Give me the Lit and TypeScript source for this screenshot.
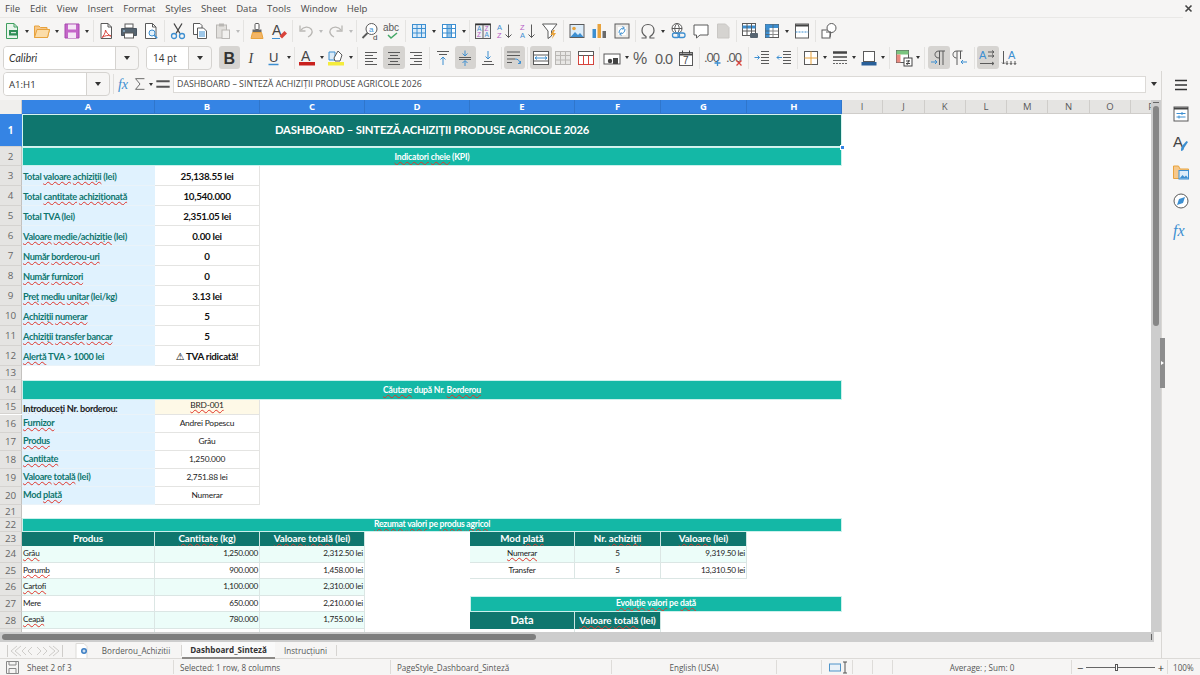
import { LitElement, html, css, svg, nothing } from "lit";
import { customElement } from "lit/decorators.js";

// shorthand for toolbar glyphs, all drawn on an 18x18 box
const G = "#5a5a5a";
const B = "#3d8fd1";
const O = "#e8a33d";
const R = "#d9443c";
const LG = "#b9b7b4";
const SANS = "Liberation Sans";

const lines = (ys: number[], x1 = 3, x2 = 15, c = G) =>
  ys.map((y) => svg`<path d="M${x1} ${y}H${x2}" stroke=${c} fill="none"/>`);

const gridIcon = (c: string, fill = "#fff") => svg`
  <rect x="2.5" y="2.5" width="13" height="13" fill=${fill} stroke=${c}/>
  <path d="M2.5 6.5h13M2.5 11h13M7 2.5v13M11.5 2.5v13" stroke=${c} fill="none"/>`;

const ICONS: Record<string, unknown> = {
  new: svg`<path d="M3.5 1.5H11L14.5 5v11.5h-11z" fill="#e9f5ec" stroke="#3f9e5f"/><path d="M11 1.5V5h3.5" fill="none" stroke="#3f9e5f"/><rect x="6" y="8" width="9" height="5.5" fill="#2f8f57"/><path d="M8 10.7h5" stroke="#fff"/>`,
  open: svg`<path d="M1.5 4v11.5h13l2-8H14V5.500H7.500L6 4z" fill="#f7c88a" stroke=${O}/><path d="M1.500 15.500l2.500-8h12.500l-2 8z" fill="#fbdca8" stroke=${O}/>`,
  save: svg`<path d="M2 2h14v14H2z" fill="#c466c9" stroke="#a648ad"/><rect x="5" y="2.5" width="8" height="5" fill="#f5e6f6"/><rect x="5" y="10.5" width="8" height="5.5" fill="#f5e6f6"/>`,
  pdf: svg`<path d="M4 1.5h7L14.5 5v11.5H4z" fill="#fff" stroke=${G}/><path d="M11 1.5V5h3.5" fill="none" stroke=${G}/><path d="M8.5 8c0 3-2 6-3.500 7.500 3-2 6-2.500 9-1.500-2.500-1-4.500-3-5.500-6z" fill="none" stroke=${R}/>`,
  print: svg`<rect x="5" y="2" width="8" height="4" fill="#fff" stroke=${G}/><path d="M1.5 6.5h15v7h-15z" fill="#566470" stroke="#4a5560"/><rect x="4.5" y="11" width="9" height="5" fill="#fff" stroke=${G}/><path d="M3 9h2" stroke="#9fd0f0"/>`,
  preview: svg`<path d="M3.5 1.5h7L14 5v11.500H3.500z" fill="#fff" stroke=${G}/><path d="M10.5 1.5V5H14" fill="none" stroke=${G}/><circle cx="10" cy="11" r="3" fill="#e3f1fb" stroke=${B}/><path d="M12.2 13.2l3 3" stroke=${B} stroke-width="1.5"/>`,
  cut: svg`<path d="M5 1.5l6 10M13 1.5l-6 10" stroke="#444" stroke-width="1.3" fill="none"/><circle cx="5" cy="14" r="2.5" fill="none" stroke=${B} stroke-width="1.3"/><circle cx="13" cy="14" r="2.5" fill="none" stroke=${B} stroke-width="1.3"/>`,
  copy: svg`<path d="M2.5 1.5H9l2 2v9H2.500z" fill="#fff" stroke=${G}/><path d="M6.5 6h6l3 3v7.500h-9z" fill="#fff" stroke=${G}/>${lines([10, 12, 14], 8, 14, B)}`,
  paste: svg`<rect x="2.5" y="3" width="10" height="13" fill="#e2e0dd" stroke=${LG}/><rect x="5" y="1.5" width="5" height="3" fill=${LG}/><rect x="8" y="8" width="7.5" height="8.5" fill="#f2f1ef" stroke=${LG}/>`,
  clone: svg`<rect x="7" y="1.5" width="4" height="6" rx="1" fill="#fff" stroke=${G}/><path d="M4.5 7.5h9v3h-9z" fill="#6a6a6a"/><path d="M4.5 10.5h9l1.500 6h-12z" fill="#f3b565" stroke=${O}/>`,
  clear: svg`<text x="2" y="13" font-size="14" font-family=${SANS} fill="#444">A</text><path d="M9.5 14l5-5 2.500 2.500-5 5z" fill=${R}/><path d="M2 16.500h8" stroke=${B}/>`,
  undo: svg`<path d="M4 8c2.500-3.500 8-4 10.500-.5 1.500 2.500 0 6-3.500 7.500" fill="none" stroke=${LG} stroke-width="1.3"/><path d="M3 3.500V9h5.500" fill="none" stroke=${LG} stroke-width="1.3"/>`,
  redo: svg`<path d="M14 8C11.500 4.500 6 4 3.500 7.500 2 10 3.500 13.500 7 15" fill="none" stroke=${LG} stroke-width="1.3"/><path d="M15 3.500V9H9.500" fill="none" stroke=${LG} stroke-width="1.3"/>`,
  find: svg`<circle cx="10.5" cy="7" r="5.5" fill="#fff" stroke=${G}/><text x="8" y="9.5" font-size="8" font-family=${SANS} fill=${B}>a</text><path d="M6.500 11l-5 5" stroke=${G} stroke-width="1.8"/><text x="12" y="17.5" font-size="8" font-family=${SANS} fill="#444">d</text>`,
  spell: svg`<text x="0" y="9" font-size="10" font-family=${SANS} fill=${G}>abc</text><path d="M5 13l3 3 6-5" fill="none" stroke="#44a868" stroke-width="1.5"/>`,
  table: gridIcon(B, "#dcecf9"),
  col: svg`${gridIcon(B)}<rect x="7" y="2.5" width="4.5" height="13" fill=${B} opacity=".55"/>`,
  sort: svg`<rect x="1.5" y="2" width="15" height="14.5" fill="#eef0f2" stroke=${G}/><path d="M1.500 2.500h15" stroke="#333" stroke-width="1.5"/><path d="M9 3v13" stroke=${G}/><text x="3" y="9" font-size="6.5" font-family=${SANS} fill=${B}>A</text><text x="3" y="15" font-size="6.5" font-family=${SANS} fill="#b65cc4">Z</text><text x="10.5" y="9" font-size="6.5" font-family=${SANS} fill="#b65cc4">Z</text><text x="10.5" y="15" font-size="6.5" font-family=${SANS} fill=${B}>A</text>`,
  asc: svg`<text x="1" y="8" font-size="7.5" font-family=${SANS} fill=${B}>A</text><text x="1" y="16" font-size="7.5" font-family=${SANS} fill="#b65cc4">Z</text><path d="M12.500 2.500v13M9.500 12.500l3 3 3-3" fill="none" stroke=${G}/>`,
  desc: svg`<text x="1" y="8" font-size="7.5" font-family=${SANS} fill="#b65cc4">Z</text><text x="1" y="16" font-size="7.5" font-family=${SANS} fill=${B}>A</text><path d="M12.500 2.500v13M9.500 12.500l3 3 3-3" fill="none" stroke=${G}/>`,
  filter: svg`<path d="M1.500 2H16l-5.500 7v5L7 16.500V9z" fill="#fff" stroke=${G}/><path d="M12 8l-2.500 5H12l-1 4 4-6h-2.500L14 8z" fill=${O}/>`,
  image: svg`<rect x="2" y="2.5" width="14" height="13" fill="#dcecf9" stroke=${G}/><circle cx="6" cy="6.5" r="1.8" fill=${O}/><path d="M2.500 15L7 10l3 3 2-2 3.500 4z" fill=${B}/>`,
  chart: svg`<rect x="2.5" y="7" width="3.5" height="9" fill=${B}/><rect x="7.5" y="2" width="3.5" height="14" fill=${O}/><rect x="12.5" y="9" width="3.5" height="7" fill="#6a6a6a"/>`,
  pivot: svg`<rect x="2" y="2" width="14" height="14" fill="#eeece9" stroke=${G}/><path d="M5 5h8v8H5z" fill="#fff"/><path d="M6 11c0-3 2-5 5-5M9.500 4.500L11.500 6l-2 1.500M12 7c0 3-2 5-5 5M8.500 13.500L6.500 12l2-1.500" fill="none" stroke=${B}/>`,
  omega: svg`<path d="M2.500 16H7v-1.500C4.500 13 3 11 3 8.500 3 5 5.500 2.500 9 2.500s6 2.500 6 6c0 2.500-1.500 4.500-4 6V16h4.500" fill="none" stroke=${G} stroke-width="1.2"/>`,
  link: svg`<circle cx="8" cy="6.5" r="5" fill="#fff" stroke=${G}/><path d="M3 6.500h10M8 1.500c-3 3-3 7 0 10M8 1.500c3 3 3 7 0 10" fill="none" stroke=${G}/><rect x="3.5" y="11" width="7" height="4.5" rx="2" fill="none" stroke=${B} stroke-width="1.3"/><rect x="9" y="11" width="7" height="4.5" rx="2" fill="none" stroke=${B} stroke-width="1.3"/>`,
  comment: svg`<path d="M2 3h14v10H8l-3.500 3v-3H2z" fill="#fff" stroke=${G}/>`,
  note: svg`<path d="M3.500 2h8L15 5.500V16H3.500z" fill="#d5d3d0" stroke="#c9c7c4"/>`,
  header: svg`<rect x="1.5" y="1.5" width="13" height="12" fill="#fff" stroke=${G}/><path d="M1.500 5h13" stroke=${B} stroke-width="3"/><path d="M1.500 9h13M6 1.500v12M10.500 1.500v12" stroke=${G}/><rect x="9" y="11" width="8" height="5" rx="1" fill="#566470"/>`,
  freeze: svg`<rect x="2.5" y="2.5" width="13" height="13" fill="#fff" stroke=${G}/><rect x="2.5" y="2.5" width="13" height="3.5" fill=${B}/><rect x="2.5" y="2.5" width="4" height="13" fill=${B}/><path d="M2.500 9h13M2.500 12.500h13M10 2.500v13" stroke=${G} opacity=".7"/>`,
  split: svg`<rect x="2.5" y="2" width="13" height="14" fill="#fff" stroke=${G}/><path d="M2.500 3.500h13" stroke="#444" stroke-width="2"/><path d="M2.500 10h13" stroke=${B} stroke-dasharray="2 1"/>`,
  shape: svg`<rect x="2" y="8" width="8" height="8" fill="#fff" stroke=${G}/><circle cx="11.5" cy="6" r="4.5" fill="#fff" stroke=${G}/><path d="M6 10h5l-1 5" fill="none" stroke=${G}/>`,

  bold: svg`<text x="3.5" y="14.5" font-size="16" font-weight="700" font-family=${SANS} fill="#333">B</text>`,
  italic: svg`<text x="5.5" y="14" font-size="14" font-style="italic" font-family="Liberation Serif" fill="#444">I</text>`,
  under: svg`<text x="4" y="12.5" font-size="13" font-family=${SANS} fill="#444">U</text><path d="M3.500 15.500h10" stroke=${B} stroke-width="1.5"/>`,
  fcolor: svg`<text x="3" y="11.5" font-size="14" font-family=${SANS} fill="#444">A</text><rect x="1" y="13" width="16" height="3.5" fill="#c9211e"/>`,
  hcolor: svg`<rect x="1" y="13" width="16" height="3.5" fill="#f5ec3c"/><path d="M2 3h6v8H2z" fill="#dcecf9" stroke=${B}/><path d="M7 9l4-7 4 4-2 6H8z" fill="#fff" stroke=${G}/>`,
  aleft: svg`<path d="M3 3.500h12M3 6.500h8M3 9.500h12M3 12.500h8M3 15.500h12" stroke=${G} fill="none"/>`,
  acenter: svg`<path d="M3 3.500h12M5 6.500h8M3 9.500h12M5 12.500h8M3 15.500h12" stroke=${G} fill="none"/>`,
  aright: svg`<path d="M3 3.500h12M7 6.500h8M3 9.500h12M7 12.500h8M3 15.500h12" stroke=${G} fill="none"/>`,
  vtop: svg`<path d="M3 2.500h12M5 5.500h8" stroke=${G} fill="none"/><path d="M9 8v8M6.500 10.500L9 8l2.500 2.500" stroke=${B} fill="none"/>`,
  vmid: svg`<path d="M3 8.500h12M3 10.500h12" stroke=${G} fill="none"/><path d="M9 1.500v5M6.500 4.500L9 7l2.500-2.500M9 17v-5M6.500 14L9 11.500l2.500 2.500" stroke=${B} fill="none"/>`,
  vbot: svg`<path d="M3 15.500h12M5 12.500h8" stroke=${G} fill="none"/><path d="M9 2v8M6.500 7.500L9 10l2.500-2.500" stroke=${B} fill="none"/>`,
  wrap: svg`${lines([3, 6.5], 2, 15)}<path d="M2 10h8M2 13.500h5" stroke=${G}/><path d="M10 10c3 0 4 1 5 4M13 14.500h2.500V12" stroke=${B} fill="none"/>`,
  merge: svg`<rect x="1.5" y="2.5" width="15" height="13" fill="#fff" stroke=${G}/><path d="M1.500 6h15M1.500 12h15" stroke=${G}/><path d="M3 9h12M5 7.500L3 9l2 1.500M13 7.500L15 9l-2 1.500" fill="none" stroke=${B}/>`,
  unmerge: svg`<rect x="1.5" y="2.5" width="15" height="13" fill="#e8e7e5" stroke=${LG}/><path d="M1.500 6.500h15M1.500 11h15M6.500 2.500v13M11.500 2.500v13" stroke=${LG}/>`,
  redgrid: svg`<rect x="1.5" y="2.5" width="15" height="13" fill="#fff" stroke=${G}/><path d="M1.500 6.500h15" stroke=${G}/><path d="M6.500 6.500v9M11.500 6.500v9M1.500 6.500v9h15v-9" stroke=${R} fill="none"/>`,
  curr: svg`<rect x="1" y="5" width="16" height="10" fill="#fff" stroke=${G}/><circle cx="7" cy="12" r="2.2" fill="#444"/><rect x="10" y="9" width="5" height="6" fill="#444"/>`,
  pct: svg`<text x="1" y="15" font-size="16" font-family=${SANS} fill=${G}>%</text>`,
  dec: svg`<text x="0" y="15" font-size="14.5" letter-spacing="-1" font-family=${SANS} fill=${G}>0.0</text>`,
  date: svg`<rect x="2.5" y="3.5" width="13" height="13" fill="#fff" stroke=${G}/><path d="M2.500 5.500h13" stroke="#444" stroke-width="2"/><path d="M5.500 1.500v3M12.500 1.500v3" stroke="#444"/><text x="6" y="15" font-size="10" font-family=${SANS} fill="#444">7</text>`,
  adddec: svg`<text x="0" y="12.5" font-size="13" letter-spacing="-1" font-family=${SANS} fill=${G}>.00</text><path d="M13.500 11v6M10.500 14h6" stroke=${B} stroke-width="1.3"/>`,
  remdec: svg`<text x="0" y="12.5" font-size="13" letter-spacing="-1" font-family=${SANS} fill=${G}>.00</text><path d="M10.500 11.500l5 5M15.500 11.500l-5 5" stroke=${R} stroke-width="1.3"/>`,
  indent: svg`${lines([2.5, 5.5, 8.5, 11.5, 14.5], 8, 16)}<path d="M1.500 8.500h5M4.500 6.500l2 2-2 2" stroke=${B} fill="none"/>`,
  outdent: svg`${lines([2.5, 5.5, 8.5, 11.5, 14.5], 8, 16)}<path d="M7 8.500H2M4 6.500l-2 2 2 2" stroke=${B} fill="none"/>`,
  borders: svg`<rect x="2.5" y="2.5" width="13" height="13" fill="#fff" stroke=${G}/><path d="M9 2.500v13M2.500 9h13" stroke=${O}/>`,
  lstyle: svg`<path d="M2 3.500h14" stroke="#444" stroke-width="2.5"/><path d="M2 8h14" stroke="#444" stroke-width="1.5"/><path d="M2 11.500h14" stroke="#666"/><path d="M2 14.500h14" stroke="#666" stroke-dasharray="2 1"/>`,
  bcolor: svg`<rect x="3.5" y="2.5" width="11" height="10" fill="#fff" stroke=${G}/><rect x="1.5" y="13" width="15" height="3.5" fill="#2a6099"/>`,
  cond: svg`<rect x="1.5" y="1.5" width="12" height="12" fill="#fff" stroke=${G}/><rect x="1.5" y="1.5" width="12" height="4" fill="#7bc47f"/><rect x="1.5" y="5.5" width="4" height="8" fill="#e98a80"/><rect x="9" y="9" width="8" height="8" fill="#fff" stroke="#444"/><path d="M11 12h4M11 14.500h4M14 11l-2 5" stroke="#444"/>`,
  ltr: svg`<path d="M9.500 2v14M13 2v14M15 2H9C6 2 5 4 5 5.500S6 9 9 9" fill="none" stroke=${G}/><path d="M1 13h6M5 11l2 2-2 2" stroke=${B} fill="none"/>`,
  rtl: svg`<path d="M5 2v14M8.500 2v8M10.500 2H4.500C2 2 1 4 1 5.500S2 9 4.500 9" fill="none" stroke=${G}/><path d="M15 13H9M11 11l-2 2 2 2" stroke=${B} fill="none"/>`,
  ahoriz: svg`<text x="0" y="10" font-size="11" font-family=${SANS} fill=${B}>A</text><path d="M9 3h6M13 1.500L15 3l-2 1.500M9 7h6M13 5.500L15 7l-2 1.500M1 14.500h14M13 13l2 1.500-2 1.500" stroke=${G} fill="none"/>`,
  avert: svg`<text x="7" y="10" font-size="11" font-family=${SANS} fill=${B}>A</text><path d="M2.500 2v13M1 13.500L2.500 15 4 13.500M6 12v3.500M4.800 14L6 15.500 7.200 14M10 12v3.500M8.800 14l1.200 1.500 1.200-1.500M14 12v3.500M12.800 14l1.200 1.500 1.200-1.500" stroke=${G} fill="none"/>`,

  burger: svg`<path d="M3 4.500h12M3 9h12M3 13.500h12" stroke="#333" stroke-width="1.5"/>`,
  props: svg`<rect x="2" y="2" width="14" height="14" fill="#fff" stroke=${G}/><path d="M2 3.500h14" stroke="#444" stroke-width="2"/><path d="M4.500 8.500h9M4.500 12h9" stroke=${B}/><path d="M10 7v3M7 10.500v3" stroke=${B}/>`,
  styles: svg`<text x="1" y="13" font-size="15" font-family=${SANS} fill="#444">A</text><path d="M9 17c3 0 3-3 3-3l4-6-1.500-1-4.500 5s-1 1-1 5z" fill=${B}/>`,
  gallery: svg`<path d="M1.500 3v12.500h15V6H8L6.500 3z" fill="#f7c88a" stroke=${O}/><rect x="7" y="7.5" width="9.5" height="8.5" fill="#dcecf9" stroke=${B}/><path d="M7.500 15.500l3-3.500 2 2 1.500-1.500 2.500 3z" fill=${B}/>`,
  nav: svg`<circle cx="9" cy="9" r="7" fill="#fff" stroke=${G}/><path d="M13 5l-2 6-6 2 2-6z" fill=${B}/>`,
  fx: svg`<text x="1" y="15" font-size="16" font-style="italic" font-family="Liberation Serif" fill=${B}>fx</text>`,
};

const icon = (name: string) =>
  html`<svg class="ico" viewBox="0 0 18 18" width="18" height="18">${ICONS[name]}</svg>`;

const TOP = "new dd open dd save dd | pdf print preview | cut copy paste ddg | clone clear | undo ddg redo ddg | find spell | table dd col dd | sort asc desc filter | image chart pivot | omega dd link comment note | header freeze dd split | shape";
const FORMAT = "*bold italic under dd | fcolor dd hcolor dd || aleft *acenter aright | vtop *vmid vbot | *wrap | *merge unmerge redgrid | curr dd pct dec date | adddec remdec | indent outdent | borders dd lstyle dd bcolor dd || cond dd || *ltr rtl | *ahoriz avert";

const tool = (t: string) => {
  if (t === "|") return html`<span class="sep"></span>`;
  if (t === "||") return html`<span class="sep wide"></span>`;
  if (t === "dd") return html`<span class="dd"></span>`;
  if (t === "ddg") return html`<span class="dd off"></span>`;
  const on = t.startsWith("*");
  return html`<span class="tb ${on ? "on" : ""}">${icon(on ? t.slice(1) : t)}</span>`;
};

// "~word" gets the red spell check wave under it
const txt = (s: string) =>
  s.split(" ").map((w, i) => {
    const sp = i ? " " : "";
    return w.startsWith("~")
      ? html`${sp}<span class="sq">${w.slice(1)}</span>`
      : html`${sp}${w}`;
  });

type Cell = [col: number, row: number, span: number, cls: string, text: string];

const ROWS = [33, 19, ...Array(10).fill(20), 14, 20, 14, ...Array(5).fill(18), 13, 14, 14, 16.6, 16.6, 16.6, 16.6, 16.6, 20];
const COLS = ["A", "B", "C", "D", "E", "F", "G", "H", "I", "J", "K", "L", "M", "N", "O", "P"];

const kpi: [string, string][] = [
  ["Total ~valoare ~achiziții (lei)", "25,138.55 lei"],
  ["Total ~cantitate ~achiziționată", "10,540.000"],
  ["Total TVA (lei)", "2,351.05 lei"],
  ["~Valoare ~medie/achiziție (lei)", "0.00 lei"],
  ["~Număr ~borderou-uri", "0"],
  ["~Număr ~furnizori", "0"],
  ["~Preț ~mediu ~unitar (lei/kg)", "3.13 lei"],
  ["~Achiziții ~numerar", "5"],
  ["~Achiziții ~transfer ~bancar", "5"],
  ["~Alertă TVA > 1000 lei", "⚠ TVA ridicată!"],
];
const lookup: [string, string][] = [
  ["~Furnizor", "Andrei Popescu"],
  ["~Produs", "Grâu"],
  ["~Cantitate", "1,250.000"],
  ["~Valoare ~totală (lei)", "2,751.88 lei"],
  ["Mod ~plată", "Numerar"],
];
const products = [
  ["~Grâu", "1,250.000", "2,312.50 lei"],
  ["~Porumb", "900.000", "1,458.00 lei"],
  ["~Cartofi", "1,100.000", "2,310.00 lei"],
  ["Mere", "650.000", "2,210.00 lei"],
  ["~Ceapă", "780.000", "1,755.00 lei"],
];

const buildCells = () => {
  const c: Cell[] = [
    [1, 1, 8, "title", "DASHBOARD – SINTEZĂ ACHIZIȚII PRODUSE AGRICOLE 2026"],
    [1, 2, 8, "band", "~Indicatori ~cheie (KPI)"],
    [1, 14, 8, "band", "~Căutare după Nr. ~Borderou"],
    [1, 15, 1, "lbl dark", "~Introduceți Nr. ~borderou:"],
    [2, 15, 1, "val input", "~BRD-001"],
    [1, 22, 8, "band small lift", "~Rezumat ~valori pe ~produs ~agricol"],
    [1, 23, 1, "head lift", "Produs"],
    [2, 23, 1, "head lift", "~Cantitate (kg)"],
    [3, 23, 1, "head lift", "~Valoare ~totală (lei)"],
    [5, 23, 1, "head lift", "Mod ~plată"],
    [6, 23, 1, "head lift", "Nr. ~achiziții"],
    [7, 23, 1, "head lift", "~Valoare (lei)"],
    [5, 24, 1, "td mid alt lift", "~Numerar"],
    [6, 24, 1, "td mid alt lift", "5"],
    [7, 24, 1, "td num alt lift", "9,319.50 lei"],
    [5, 25, 1, "td mid lift", "Transfer"],
    [6, 25, 1, "td mid lift", "5"],
    [7, 25, 1, "td num lift", "13,310.50 lei"],
    [5, 27, 4, "band lift", "~Evoluție ~valori pe ~dată"],
    [5, 28, 1, "head big lift", "Data"],
    [6, 28, 1, "head lift", "~Valoare ~totală (lei)"],
    [1, 29, 1, "td", ""],
    [2, 29, 1, "td", ""],
    [3, 29, 1, "td", ""],
    [5, 29, 1, "td", ""],
    [6, 29, 1, "td", ""],
  ];
  kpi.forEach(([l, v], i) => {
    c.push([1, 3 + i, 1, "lbl low", l], [2, 3 + i, 1, "val big low", v]);
  });
  lookup.forEach(([l, v], i) => {
    c.push([1, 16 + i, 1, "lbl lift", l], [2, 16 + i, 1, "val lift", v]);
  });
  products.forEach(([p, q, t], i) => {
    const alt = i % 2 ? "" : "alt";
    c.push([1, 24 + i, 1, `td lift ${alt}`, p], [2, 24 + i, 1, `td num lift ${alt}`, q], [3, 24 + i, 1, `td num lift ${alt}`, t]);
  });
  return c;
};

@customElement("app-root")
export class AppRoot extends LitElement {
  static styles = css`
    :host {
      display: block;
      width: 1200px;
      height: 675px;
      overflow: hidden;
      background: #f6f5f4;
      font-family: "Open Sans", "Noto Sans", sans-serif;
      color: #444;
    }
    .menubar {
      height: 17px;
      display: flex;
      align-items: center;
      gap: 9.8px;
      padding: 0 5px;
      font-size: 9.6px;
      color: #4a4a4a;
      border-bottom: 1px solid #e9e8e6;
      margin-right: 17px;
      position: relative;
    }
    .close {
      position: absolute;
      right: -10px;
      top: 4px;
    }
    .bar {
      display: flex;
      align-items: center;
      padding-left: 1px;
    }
    .top { height: 26px; }
    .fmt { height: 27px; padding-left: 3px; }
    .tb {
      width: 22.5px;
      height: 23px;
      flex: none;
      display: flex;
      align-items: center;
      justify-content: center;
      border-radius: 3px;
    }
    .tb.on { background: #d6d4d1; width: 21.5px; margin: 0 .5px; }
    .dd {
      width: 7.5px;
      flex: none;
      display: flex;
      justify-content: center;
    }
    .fmt .dd { width: 6.5px; }
    .dd::after {
      content: "";
      border: 2.5px solid transparent;
      border-top: 3px solid #333;
      border-bottom: 0;
    }
    .dd.off::after { border-top-color: #bbb; }
    .sep {
      width: 4px;
      height: 22px;
      flex: none;
      display: flex;
      justify-content: center;
    }
    .sep.wide { width: 6px; }
    .sep::after { content: ""; width: 1px; background: #e4e3e1; }
    .combo {
      height: 22px;
      display: flex;
      flex: none;
      border: 1px solid #d5d3d0;
      border-radius: 4px;
      background: #f6f5f4;
      font-size: 10px;
      color: #333;
    }
    .combo .field {
      background: #fff;
      flex: 1;
      display: flex;
      align-items: center;
      padding-left: 5px;
      border-right: 1px solid #d5d3d0;
      border-radius: 3px 0 0 3px;
    }
    .combo .btn {
      width: 22px;
      display: flex;
      align-items: center;
      justify-content: center;
    }
    .combo .btn::after {
      content: "";
      border: 3.5px solid transparent;
      border-top: 4px solid #333;
      border-bottom: 0;
    }
    .font { width: 134px; margin-right: 7px; }
    .font .field { font-family: "Lato", sans-serif; font-style: italic; font-size: 10.5px; }
    .size { width: 64px; margin-right: 6px; }
    .size .field { padding-left: 6px; }

    .body { display: flex; height: 587px; }
    .main { width: 1161px; flex: none; display: flex; flex-direction: column; border-right: 1px solid #d9d7d4; }
    .fbar { height: 29px; display: flex; align-items: flex-start; padding: 1px 0 0 3px; flex: none; box-sizing: border-box; }
    .name { width: 105px; margin-right: 3px; height: 22px; }
    .name .field { padding-left: 5px; color: #333; font-size: 9.6px; }
    .fbar .tb { height: 24px; }
    .fbar .tb svg { width: 16px; height: 16px; }
    .fbar .dd { padding-top: 11px; }
    .fbar .tb.fx { width: 16px; }
    .fbar .tb.sum { width: 14px; }
    .fbar .tb.eq { width: 16px; }
    .fsep { width: 1px; height: 20px; margin: 2px 3px 0 0; background: #e0dfdd; flex: none; }
    .finput {
      width: 973px;
      height: 17px;
      margin: 4px 0 0 2.5px;
      background: #fff;
      border: 1px solid #dcdad7;
      font-size: 8.8px;
      line-height: 15px;
      padding-left: 3px;
      box-sizing: border-box;
      color: #444;
      flex: none;
    }
    .fdd {
      width: 15px;
      display: flex;
      justify-content: center;
      padding-top: 10px;
      flex: none;
    }
    .fdd::after {
      content: "";
      border: 3.5px solid transparent;
      border-top: 4px solid #333;
      border-bottom: 0;
      height: 0;
    }
    .sheetwrap { display: flex; height: 532px; flex: none; }
    .sheet {
      width: 1151px;
      flex: none;
      display: grid;
      grid-template-columns: 22px 133px 105px 105px 105px 105px 86px 86px 95px repeat(8, 41.3px);
      grid-auto-rows: min-content;
      align-content: start;
      overflow: hidden;
      background: #fff;
      font-family: "Lato", "DejaVu Sans", sans-serif;
      font-size: 10px;
      color: #1c1c1c;
    }
    .corner { background: #f0efed; border-right: 1px solid #cfcdca; }
    .ch, .rh {
      display: flex;
      align-items: center;
      justify-content: center;
      font-family: "Open Sans", sans-serif;
      background: #e5e4e2;
      color: #5a5a5a;
      font-size: 9.5px;
      box-sizing: border-box;
      overflow: hidden;
    }
    .ch { height: 14px; border-right: 1px solid #cfcdca; border-bottom: 1px solid #cfcdca; }
    .ch.sel { background: #3584e4; color: #fff; font-weight: 700; border-right-color: #2f76cc; border-bottom-color: #2f76cc; }
    .rh { border-right: 1px solid #c4c2bf; border-bottom: 1px solid #d5d3d0; font-size: 9.8px; color: #666; }
    .rh.sel { background: #3584e4; color: #fff; font-weight: 700; border-right-color: #3584e4; }
    .cell {
      display: flex;
      align-items: center;
      box-sizing: border-box;
      overflow: hidden;
      white-space: pre;
      min-width: 0;
      min-height: 0;
    }
    .cell.low { padding-top: 1px; }
    .cell.lift { padding-bottom: 1.5px; }
    .sq {
      text-decoration: underline wavy #e0352b 1px;
      text-underline-offset: .5px;
      text-decoration-skip-ink: none;
    }
    .title {
      background: #0f766e;
      color: #fff;
      font-weight: 700;
      font-size: 11.3px;
      letter-spacing: -.2px;
      justify-content: center;
      padding-bottom: 2px;
      box-shadow: inset 0 0 0 1px #d6f5f0;
      position: relative;
      overflow: visible;
    }
    .handle {
      position: absolute;
      right: -3px;
      bottom: -3px;
      width: 5px;
      height: 5px;
      background: #3584e4;
      border: 1px solid #fff;
      box-sizing: border-box;
      z-index: 2;
    }
    .band {
      background: #14b8a6;
      color: #fff;
      font-weight: 700;
      font-size: 8.6px;
      letter-spacing: -.2px;
      justify-content: center;
      border: 1px solid #cbf1ec;
    }
    .band.small { letter-spacing: -.25px; }
    .lbl {
      background: #e0f2fe;
      color: #0f766e;
      font-weight: 700;
      font-size: 9.2px;
      letter-spacing: -.3px;
      padding-left: 1px;
      border-bottom: 1px solid #eaf3f9;
    }
    .lbl.dark { color: #1c1c1c; padding-top: 3px; }
    .val {
      justify-content: center;
      font-size: 8.4px;
      letter-spacing: -.2px;
      background: #fff;
      border: 1px solid #e4e4e2;
      border-width: 0 1px 1px 0;
    }
    .val.big { font-weight: 700; font-size: 9.8px; letter-spacing: -.3px; color: #111; }
    .val.input { background: #fef9e7; align-items: flex-start; }
    .head {
      background: #0f766e;
      color: #fff;
      font-weight: 700;
      font-size: 9.8px;
      letter-spacing: -.1px;
      justify-content: center;
      border-right: 1px solid #cfe6e3;
    }
    .head.big { font-size: 11px; }
    .td {
      font-size: 8.2px;
      letter-spacing: -.25px;
      padding: 0 1px;
      background: #fff;
      border-right: 1px solid #dbe6e4;
      border-bottom: 1px solid #dbe6e4;
    }
    .td.alt { background: #ecfdf9; }
    .td.num { justify-content: flex-end; }
    .td.mid { justify-content: center; }

    .vscroll { width: 10px; flex: none; background: #cdcdcd; display: flex; flex-direction: column; align-items: center; gap: 3px; padding-top: 2px; box-sizing: border-box; }
    .vtick { width: 6px; height: 1px; background: #666; }
    .vthumb { width: 6px; height: 220px; background: #868686; border-radius: 3px; }
    .hscroll { height: 10px; width: 1150px; flex: none; background: #cdcdcd; display: flex; align-items: center; justify-content: space-between; padding: 0 2px; box-sizing: content-box; }
    .hthumb { width: 534px; height: 6px; background: #7e7e7e; border-radius: 3px; }
    .htick { width: 1px; height: 6px; background: #666; }
    .tabs {
      flex: 1;
      display: flex;
      align-items: stretch;
      font-size: 8.1px;
      color: #555;
    }
    .navs { width: 64px; padding-left: 6px; display: flex; align-items: center; box-sizing: border-box; }
    .addtab { width: 27px; display: flex; align-items: center; padding-left: 11px; box-sizing: border-box; }
    .tab { display: flex; align-items: center; justify-content: center; box-sizing: border-box; }
    .tab.a { width: 91px; border-right: 1px solid #d6d4d1; margin: 3px 0; }
    .tab.b { width: 93px; font-weight: 700; color: #333; background: #fafafa; border-bottom: 2px solid #8c8a87; }
    .tab.c { width: 62px; border-right: 1px solid #d6d4d1; margin: 3px 0; }

    .side { flex: 1; display: flex; flex-direction: column; align-items: center; position: relative; padding-top: 4px; gap: 9px; }
    .side svg { width: 18px; height: 20px; display: block; }
    .grip {
      position: absolute;
      left: -2px;
      top: 267px;
      width: 5px;
      height: 50px;
      background: #8d8d8d;
      display: flex;
      align-items: center;
    }
    .grip::after {
      content: "";
      border: 2px solid transparent;
      border-left: 3px solid #fff;
      border-right: 0;
      margin-left: 1px;
    }

    .status {
      height: 17px;
      display: flex;
      align-items: center;
      border-top: 1px solid #dcdad7;
      font-size: 8.1px;
      color: #555;
      box-sizing: border-box;
    }
    .st {
      height: 14px;
      display: flex;
      align-items: center;
      box-sizing: border-box;
      border-right: 1px solid #dedcd9;
      flex: none;
    }
    .st.sheetno { width: 174px; padding-left: 6px; gap: 8px; }
    .st.sel { width: 217px; padding-left: 6px; }
    .st.page { width: 221px; padding-left: 6px; }
    .st.lang { width: 165px; justify-content: center; }
    .st.w45 { width: 45px; }
    .st.ins { width: 31px; padding-left: 7px; }
    .st.w20 { width: 20px; }
    .st.sum { width: 179px; justify-content: center; }
    .st.zoombar { width: 96px; padding: 0 3px 0 5px; }
    .pct { padding-left: 5px; }
    .slider { flex: 1; height: 1px; background: #666; position: relative; margin: 0 3px; }
    .knob { position: absolute; left: 29px; top: -3px; width: 3px; height: 7px; background: #fff; border: 1px solid #555; box-sizing: border-box; }
    .zoom { font-size: 11px; color: #333; }
  `;

  render() {
    const cells = buildCells();
    return html`
      <div class="menubar">
        ${["File", "Edit", "View", "Insert", "Format", "Styles", "Sheet", "Data", "Tools", "Window", "Help"].map((m) => html`<span>${m}</span>`)}
        <svg class="close" width="9" height="9" viewBox="0 0 9 9"><path d="M1.500 1.500l6 6M7.500 1.500l-6 6" stroke="#444" stroke-width="1.6"/></svg>
      </div>
      <div class="bar top">${TOP.split(" ").map(tool)}</div>
      <div class="bar fmt">
        <div class="combo font"><div class="field">Calibri</div><div class="btn"></div></div>
        <div class="combo size"><div class="field">14 pt</div><div class="btn"></div></div>
        ${FORMAT.split(" ").map(tool)}
      </div>
      <div class="body">
        <div class="main">
          <div class="fbar">
            <div class="combo name"><div class="field">A1:H1</div><div class="btn"></div></div>
            <span class="fsep"></span>
            <span class="tb fx">${icon("fx")}</span>
            <span class="tb sum">
              <svg width="14" height="18" viewBox="0 0 14 18"><path d="M12 3H2l5 6-5 6h10" fill="none" stroke="#5a5a5a"/></svg>
            </span>
            <span class="dd"></span>
            <span class="tb eq">
              <svg width="12" height="12" viewBox="0 0 12 12"><path d="M1 4h10M1 8h10" stroke="#555" stroke-width="1.5"/></svg>
            </span>
            <div class="finput">DASHBOARD – SINTEZĂ ACHIZIȚII PRODUSE AGRICOLE 2026</div>
            <span class="fdd"></span>
          </div>
          <div class="sheetwrap">
            <div class="sheet">
              <div class="corner"></div>
              ${COLS.map((c, i) => html`<div class="ch ${i < 8 ? "sel" : ""}">${c}</div>`)}
              ${ROWS.map((h, i) => html`<div class="rh ${i === 0 ? "sel" : ""}" style="grid-column:1;grid-row:${i + 2};height:${h}px">${i < 28 ? i + 1 : nothing}</div>`)}
              ${cells.map(([c, r, s, cls, t]) => html`<div class="cell ${cls}" style="grid-column:${c + 1} / span ${s};grid-row:${r + 1}"><span>${t ? txt(t) : nothing}</span>${cls === "title" ? html`<span class="handle"></span>` : nothing}</div>`)}
            </div>
            <div class="vscroll"><div class="vtick"></div><div class="vthumb"></div></div>
          </div>
          <div class="hscroll"><div class="hthumb"></div><div class="htick"></div></div>
          <div class="tabs">
            <div class="navs">
              <svg width="58" height="14" viewBox="0 0 58 14" fill="none" stroke="#cfcdca">
                <path d="M1.500 1v12M11 2L5 7l6 5M15 2L9 7l6 5M20 3l-4 4 4 4M26 3l-4 4 4 4M31 3l4 4-4 4M37 3l4 4-4 4M43 2l6 5-6 5M47 2l6 5-6 5M56.500 1v12"/>
              </svg>
            </div>
            <div class="addtab">
              <svg width="16" height="16" viewBox="0 0 16 16">
                <path d="M1 .5h8l3 3v12H1z" fill="#fff" stroke="#dddbd8"/>
                <circle cx="9" cy="8" r="3" fill="#3d7fc4"/><path d="M7.500 8h3M9 6.500v3" stroke="#fff"/>
              </svg>
            </div>
            <div class="tab a">Borderou_Achizitii</div>
            <div class="tab b">Dashboard_Sinteză</div>
            <div class="tab c">Instrucțiuni</div>
          </div>
        </div>
        <div class="side">
          <span class="grip"></span>
          ${["burger", "props", "styles", "gallery", "nav", "fx"].map((n) => icon(n))}
        </div>
      </div>
      <div class="status">
        <span class="st sheetno"><svg width="13" height="13" viewBox="0 0 13 13"><path d="M.5.500h12v12H.5z" fill="none" stroke="#888"/><path d="M3 1v3h7V1M3 12V7.500h7V12" fill="none" stroke="#888"/></svg><span>Sheet 2 of 3</span></span>
        <span class="st sel">Selected: 1 row, 8 columns</span>
        <span class="st page">PageStyle_Dashboard_Sinteză</span>
        <span class="st lang">English (USA)</span>
        <span class="st w45"></span>
        <span class="st ins">
          <svg width="20" height="13" viewBox="0 0 20 13"><rect x=".5" y="3" width="11" height="7" fill="#e9f1f8" stroke="#4f94c9"/><path d="M16 1v11M14 1h4M14 12h4" stroke="#555"/></svg>
        </span>
        <span class="st w20"></span>
        <span class="st w20"></span>
        <span class="st sum">Average: ; Sum: 0</span>
        <span class="st zoombar">
          <span class="zoom">−</span><span class="slider"><span class="knob"></span></span><span class="zoom">+</span>
        </span>
        <span class="pct">100%</span>
      </div>
    `;
  }
}
